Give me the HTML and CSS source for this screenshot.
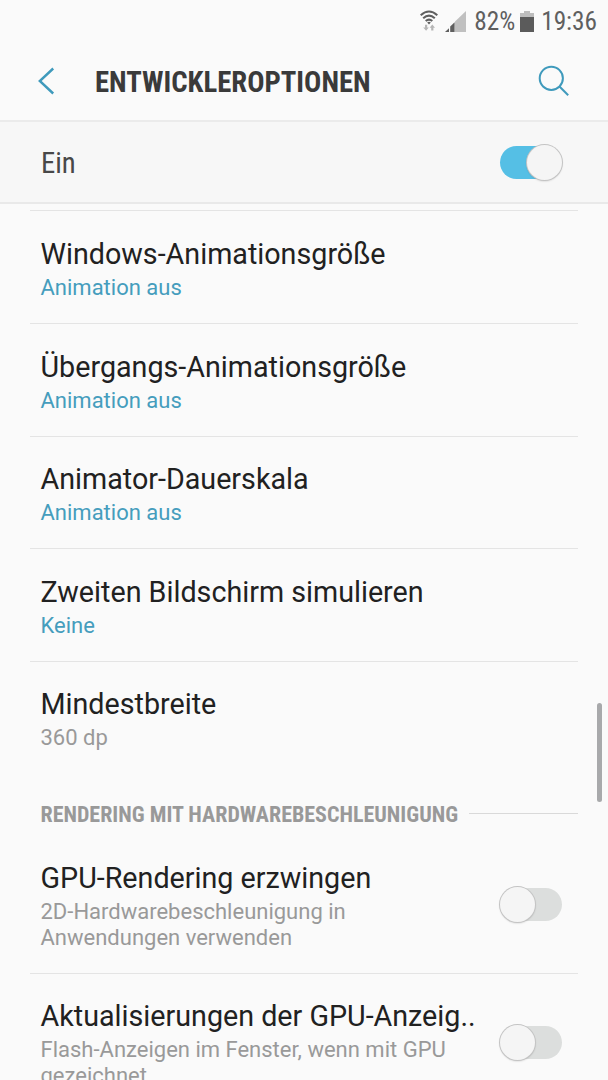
FILE: index.html
```html
<!DOCTYPE html>
<html lang="de">
<head>
    <meta charset="UTF-8">
    <title>Entwickleroptionen</title>
    <link rel="stylesheet" href="styles.css">
</head>
<body>
    <div class="statusbar">
        <svg class="wifi" width="18" height="22" viewBox="0 0 18 22" fill="none">
            <g stroke="#5f5f5f" stroke-width="2.1">
                <path d="M0.7 5.2 Q9 -2.2 17.3 5.2"/>
                <path d="M3.2 8.2 Q9 3 14.8 8.2"/>
                <path d="M5.7 11 Q9 8.2 12.3 11"/>
            </g>
            <path d="M7.2 12.4 Q9 11 10.8 12.4 L9 14.4 Z" fill="#5f5f5f"/>
            <path d="M5 14.8 V17.4 H3.2 L6.1 20.8 L8.8 17.4 H7.2 V14.8 Z" fill="#b5b5b5"/>
            <path d="M11.2 20.4 V17.8 H9.6 L12.3 14.4 L15 17.8 H13.4 V20.4 Z" fill="#b5b5b5"/>
        </svg>
        <svg class="signal" width="21" height="21" viewBox="0 0 21 21">
            <path d="M10 21 V10.5 L21 0 V21 Z" fill="#c0c0c0"/>
            <path d="M0 21 L4 17.2 V21 Z" fill="#5f5f5f"/>
            <path d="M5.2 21 V15.6 L9.6 11.2 V21 Z" fill="#5f5f5f"/>
        </svg>
        <span class="condensed">82%</span>
        <svg class="battery" width="14" height="21" viewBox="0 0 14 21">
            <path d="M0 2 H4 V0 H10 V2 H14 V6 H0 Z" fill="#bdbdbd"/>
            <path d="M0 6 H14 V21 H0 Z" fill="#5b5b5b"/>
        </svg>
        <span class="condensed">19:36</span>
    </div>

    <header class="header">
        <svg class="back" width="18" height="28" viewBox="0 0 18 28" fill="none" stroke="#3f9abc" stroke-width="2.4">
            <path d="M16.2 1.5 L2.8 14 L16.2 26.5"/>
        </svg>
        <h1 class="condensed">ENTWICKLEROPTIONEN</h1>
        <svg class="search" width="32" height="32" viewBox="0 0 32 32" fill="none" stroke="#3f9abc" stroke-width="2">
            <circle cx="13.3" cy="13.3" r="11.6"/>
            <path d="M21.5 21.5 L30.2 30.2"/>
        </svg>
    </header>

    <div class="master">
        <span class="condensed">Ein</span>
        <div class="switch on"><div class="thumb"></div></div>
    </div>

    <main class="list">
        <div class="row">
            <div class="text">
                <div class="title">Windows-Animationsgröße</div>
                <div class="sub blue">Animation aus</div>
            </div>
        </div>
        <div class="row">
            <div class="text">
                <div class="title">Übergangs-Animationsgröße</div>
                <div class="sub blue">Animation aus</div>
            </div>
        </div>
        <div class="row">
            <div class="text">
                <div class="title">Animator-Dauerskala</div>
                <div class="sub blue">Animation aus</div>
            </div>
        </div>
        <div class="row">
            <div class="text">
                <div class="title">Zweiten Bildschirm simulieren</div>
                <div class="sub blue">Keine</div>
            </div>
        </div>
        <div class="row">
            <div class="text">
                <div class="title">Mindestbreite</div>
                <div class="sub">360 dp</div>
            </div>
        </div>

        <div class="section">
            <h2 class="condensed">RENDERING MIT HARDWAREBESCHLEUNIGUNG</h2>
            <div class="line"></div>
        </div>

        <div class="row first">
            <div class="text">
                <div class="title">GPU-Rendering erzwingen</div>
                <div class="sub">2D-Hardwarebeschleunigung in<br>Anwendungen verwenden</div>
            </div>
            <div class="switch"><div class="thumb"></div></div>
        </div>
        <div class="row">
            <div class="text">
                <div class="title">Aktualisierungen der GPU-Anzeig..</div>
                <div class="sub">Flash-Anzeigen im Fenster, wenn mit GPU<br>gezeichnet</div>
            </div>
            <div class="switch"><div class="thumb"></div></div>
        </div>
    </main>

    <div class="scrollbar"></div>
</body>
</html>
```

FILE: styles.css
```css
* {
    box-sizing: border-box;
}

body {
    margin: 0;
    height: 1080px;
    overflow: hidden;
    position: relative;
    background-color: #fafafa;
    color: #212121;
    font-family: Roboto, "Liberation Sans", sans-serif;
}

.condensed {
    font-family: "Roboto Condensed", Roboto, sans-serif;
    font-stretch: 75%;
}

.statusbar {
    display: flex;
    justify-content: flex-end;
    align-items: center;
    height: 42px;
    padding-right: 11px;
    font-size: 25.3px;
    color: #5f5f5f;
}

.wifi {
    margin-right: 7px;
}

.signal {
    margin-right: 8px;
}

.battery {
    margin: 0 7px 0 5px;
}

.header {
    display: flex;
    align-items: center;
    height: 80px;
    padding: 0 38px 0 37px;
    border-bottom: 2px solid #ebebeb;
}

h1 {
    flex: 1;
    margin: 2px 0 0 40px;
    font-size: 28.7px;
    line-height: 34px;
    color: #3a3a3a;
}

.master {
    display: flex;
    align-items: center;
    justify-content: space-between;
    height: 82px;
    padding: 1px 46px 0 41px;
    background-color: #f7f7f7;
    border-bottom: 2px solid #e9e9e9;
    font-size: 28.7px;
    color: #484848;
}

.master span {
    padding-top: 1px;
}

.switch {
    display: flex;
    align-items: center;
    flex: none;
    width: 62px;
    height: 33px;
    border-radius: 17px;
    background-color: #dcdedd;
}

.thumb {
    flex: none;
    width: 35px;
    height: 35px;
    border-radius: 50%;
    background-color: #f5f5f5;
    box-shadow: 0 0 0 1px #c4c4c4, 0 1px 2px rgba(0, 0, 0, 0.25);
}

.switch.on {
    justify-content: flex-end;
    background-color: #55bfe5;
}

.list {
    padding: 6.4px 30px 0;
}

.row {
    display: flex;
    height: 112.6px;
    padding: 25.6px 16px 0 10.5px;
    border-top: 1px solid #e4e4e4;
}

.text {
    flex: 1;
    white-space: nowrap;
}

.title {
    font-size: 28.7px;
    line-height: 34px;
}

.sub {
    margin-top: 4px;
    font-size: 22px;
    line-height: 26px;
    color: #999;
}

.sub.blue {
    color: #459dbd;
}

.row .switch {
    margin-top: 27px;
}

.row.first {
    border-top: none;
    height: 137px;
}

.section {
    display: flex;
    align-items: center;
    height: 62.3px;
    padding: 18px 0 0 10.5px;
}

h2 {
    margin: 1px 0 0;
    font-size: 22px;
    color: #999;
    white-space: nowrap;
}

.line {
    flex: 1;
    height: 1.5px;
    margin-left: 11px;
    background-color: #d9d9d9;
}

.scrollbar {
    position: absolute;
    right: 6px;
    top: 703px;
    width: 5px;
    height: 99px;
    border-radius: 3px;
    background-color: #a8a9ab;
}
```
